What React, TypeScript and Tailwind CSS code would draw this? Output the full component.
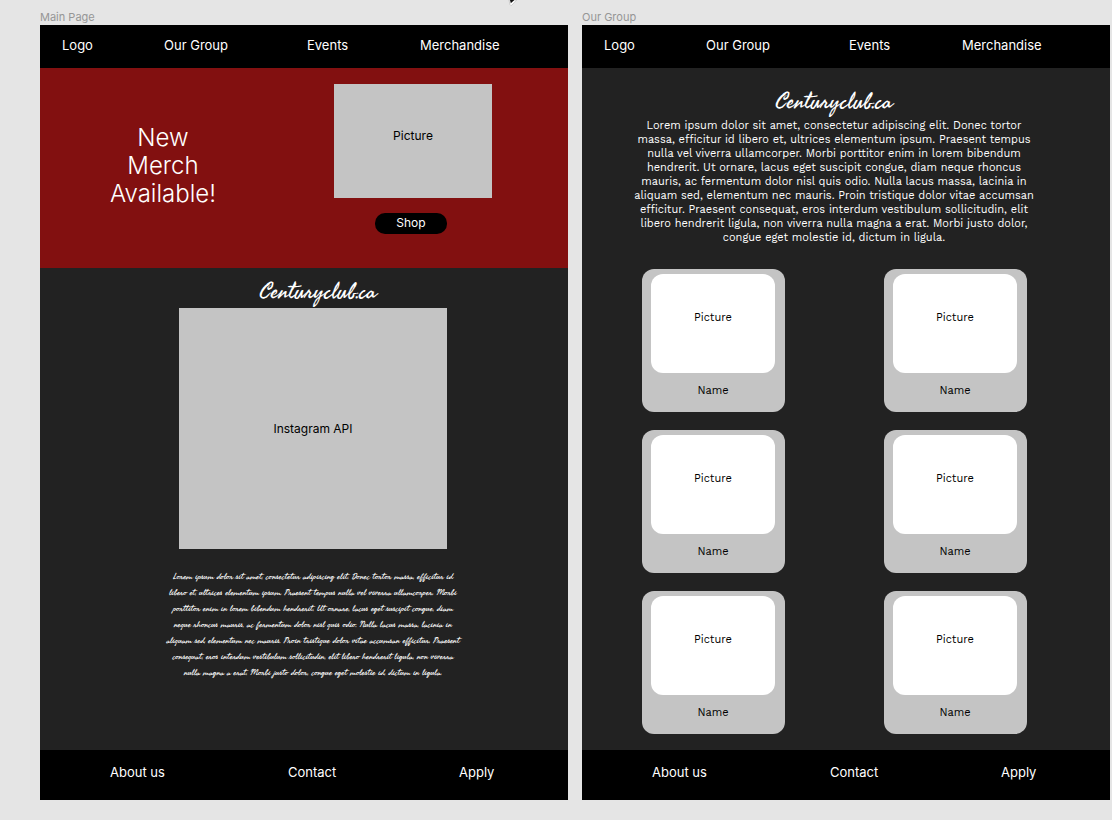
import React from "react";

const navItems = ["Logo", "Our Group", "Events", "Merchandise"];
const footerItems = ["About us", "Contact", "Apply"];

const mainLines = [
  "Lorem ipsum dolor sit amet, consectetur adipiscing elit. Donec tortor massa, efficitur id",
  "libero et, ultrices elementum ipsum. Praesent tempus nulla vel viverra ullamcorper. Morbi",
  "porttitor enim in lorem bibendum hendrerit. Ut ornare, lacus eget suscipit congue, diam",
  "neque rhoncus mauris, ac fermentum dolor nisl quis odio. Nulla lacus massa, lacinia in",
  "aliquam sed, elementum nec mauris. Proin tristique dolor vitae accumsan efficitur. Praesent",
  "consequat, eros interdum vestibulum sollicitudin, elit libero hendrerit ligula, non viverra",
  "nulla magna a erat. Morbi justo dolor, congue eget molestie id, dictum in ligula.",
];

const groupLines = [
  "Lorem ipsum dolor sit amet, consectetur adipiscing elit. Donec tortor",
  "massa, efficitur id libero et, ultrices elementum ipsum. Praesent tempus",
  "nulla vel viverra ullamcorper. Morbi porttitor enim in lorem bibendum",
  "hendrerit. Ut ornare, lacus eget suscipit congue, diam neque rhoncus",
  "mauris, ac fermentum dolor nisl quis odio. Nulla lacus massa, lacinia in",
  "aliquam sed, elementum nec mauris. Proin tristique dolor vitae accumsan",
  "efficitur. Praesent consequat, eros interdum vestibulum sollicitudin, elit",
  "libero hendrerit ligula, non viverra nulla magna a erat. Morbi justo dolor,",
  "congue eget molestie id, dictum in ligula.",
];

function Lines({ lines }: { lines: string[] }) {
  return (
    <>
      {lines.map((line) => (
        <span key={line} className="block whitespace-nowrap">
          {line}{" "}
        </span>
      ))}
    </>
  );
}

function Wordmark() {
  return (
    <h2 className="text-center font-['Seaweed_Script','Dancing_Script','Liberation_Serif',cursive] text-[23px] leading-7 text-white">
      Centuryclub.ca
    </h2>
  );
}

function Frame({ title, children }: { title: string; children: React.ReactNode }) {
  return (
    <section className="flex min-w-0 flex-col">
      <h1 className="h-[25px] pt-[9px] text-[11px] leading-4 text-[#969696]">{title}</h1>
      <div className="flex grow flex-col bg-[#222222]">
        <nav className="grid h-[43px] grid-cols-[102fr_143fr_113fr_148fr] items-center bg-black pl-[22px] text-[13px] leading-5 text-white">
          {navItems.map((item) => (
            <a key={item} href="#" className="justify-self-start pb-1">
              {item}
            </a>
          ))}
        </nav>
        <div className="flex grow flex-col">{children}</div>
        <footer className="grid h-[50px] grid-cols-[178fr_171fr_109fr] items-center bg-black pl-[70px] text-[13px] leading-5 text-white">
          {footerItems.map((item) => (
            <a key={item} href="#" className="justify-self-start pb-[6px]">
              {item}
            </a>
          ))}
        </footer>
      </div>
    </section>
  );
}

function MemberCard() {
  return (
    <article className="flex h-[143px] w-[143px] flex-col items-center rounded-[12px] bg-[#c4c4c4] pt-[5px] text-[11px] leading-4 text-black">
      <div className="h-[99px] w-[124px] rounded-[12px] bg-white pt-9 text-center">Picture</div>
      <p className="pt-[10px]">Name</p>
    </article>
  );
}

export default function App() {
  return (
    <main className="relative grid min-h-screen grid-cols-2 gap-x-[14px] bg-[#e5e5e5] pr-[2px] pb-5 pl-10 font-['Inter',sans-serif]">
      <svg className="absolute top-0 left-[508px]" width="14" height="8" viewBox="0 0 14 8" aria-hidden="true">
        <path d="M1 0 L2 4.6 Q2.8 6.6 4 5 L8.5 0 Z" fill="#fff" stroke="#aaa" strokeWidth="0.5" />
        <path d="M2 0 L2.8 3.2 L6.4 0 Z" fill="#111" />
      </svg>
      <Frame title="Main Page">
        <div className="grid h-[200px] grid-cols-[246fr_254fr_28fr] bg-[#821010] text-white">
          <p className="self-center pb-1 text-center text-[24px] leading-7 font-light">
            New
            <br />
            Merch
            <br />
            Available!
          </p>
          <div className="flex flex-col items-center pt-4">
            <div className="h-[114px] w-[158px] bg-[#c4c4c4] pt-11 text-center text-[12px] leading-4 text-black">
              Picture
            </div>
            <div className="pt-[15px] pr-1">
              <button className="block h-[21px] w-[72px] rounded-[10px] bg-black pb-px text-[12px] leading-4">Shop</button>
            </div>
          </div>
        </div>
        <div className="flex flex-col items-center pt-[10px] pl-[18px]">
          <div className="pb-[2px] pl-[10px]">
            <Wordmark />
          </div>
          <div className="flex h-[241px] w-[268px] items-center justify-center bg-[#c4c4c4] text-[12px] leading-4 text-black">
            Instagram API
          </div>
          <p className="pt-5 text-center font-['Seaweed_Script','Dancing_Script','Liberation_Serif',cursive] text-[9px] leading-4 text-white">
            <Lines lines={mainLines} />
          </p>
        </div>
      </Frame>
      <Frame title="Our Group">
        <div className="flex flex-col items-center pt-5 pr-6">
          <Wordmark />
          <p className="pt-[3px] text-center font-['Work_Sans','Inter',sans-serif] text-[11px] leading-[14px] text-white">
            <Lines lines={groupLines} />
          </p>
          <div className="grid grid-cols-2 gap-x-[99px] gap-y-[18px] pt-6 pb-[15px] font-['Work_Sans','Inter',sans-serif]">
            {[1, 2, 3, 4, 5, 6].map((id) => (
              <MemberCard key={id} />
            ))}
          </div>
        </div>
      </Frame>
    </main>
  );
}
